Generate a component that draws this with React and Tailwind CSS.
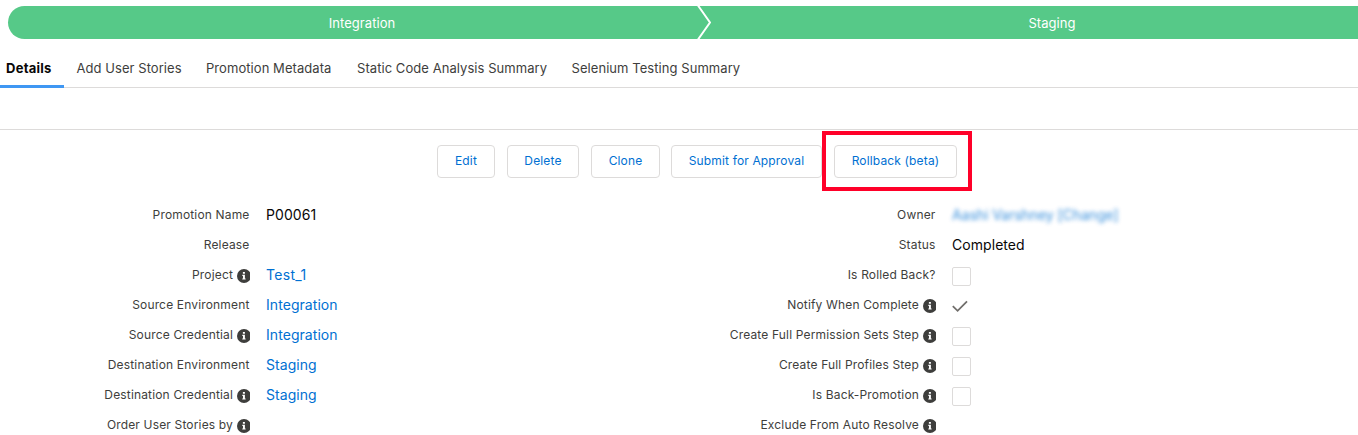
import React from "react";
import clsx from "clsx";

const tabs = [
  { label: "Details", width: "w-[70.5px]", active: true },
  { label: "Add User Stories", width: "w-[129.5px]" },
  { label: "Promotion Metadata", width: "w-[151px]" },
  { label: "Static Code Analysis Summary", width: "w-[214.5px]" },
  { label: "Selenium Testing Summary", width: "w-[200px]" },
];

const leftFields = [
  { label: "Promotion Name", value: "P00061" },
  { label: "Release" },
  { label: "Project", info: true, value: "Test_1", link: true, spacing: "tracking-[0.3px]" },
  { label: "Source Environment", value: "Integration", link: true },
  { label: "Source Credential", info: true, value: "Integration", link: true },
  { label: "Destination Environment", value: "Staging", link: true },
  { label: "Destination Credential", info: true, value: "Staging", link: true },
  { label: "Order User Stories by", info: true },
];

const rightFields = [
  { label: "Owner", value: "Aashi Varshney [Change]", link: true, blurred: true, spacing: "tracking-[-0.05px]" },
  { label: "Status", value: "Completed" },
  { label: "Is Rolled Back?", checked: false },
  { label: "Notify When Complete", info: true, checked: true },
  { label: "Create Full Permission Sets Step", info: true, checked: false },
  { label: "Create Full Profiles Step", info: true, checked: false },
  { label: "Is Back-Promotion", info: true, checked: false },
  { label: "Exclude From Auto Resolve", info: true },
];

// The right edge of the circle is cut off by its 12.5px wide box
const InfoIcon = () => (
  <svg className="ml-1 mt-px h-[14px] w-[12.5px] shrink-0" viewBox="0 0 12.5 14">
    <circle cx="7" cy="7" r="7" fill="#3e3e3c" />
    <path d="M5.9 3h2v1.8h-2zM5.3 5.8h2.6v3.7h.7v1.1H5.3V9.5H6V6.9h-.7z" fill="#fff" />
  </svg>
);

const Checkbox = ({ checked }) =>
  checked ? (
    <svg className="-ml-[0.5px] mt-px h-4 w-4" viewBox="0 0 16 16" fill="none">
      <path d="M.8 8.2 5.6 12.8 15 3.4" stroke="#706e6b" strokeWidth="1.8" />
    </svg>
  ) : (
    <span className="-ml-[0.5px] mt-0.5 block h-[19px] w-[19px] rounded-[2px] border border-[#dddbda] bg-white" />
  );

const Field = ({ label, info, value, link, blurred, checked, spacing = "tracking-[0.06px]" }) => (
  <div className="flex h-[30px] items-center">
    <div className="flex w-[249.5px] shrink-0 items-center justify-end whitespace-nowrap text-[12px] leading-[18px] tracking-[0.16px] text-[#3e3e3c]">
      {label}
      {info && <InfoIcon />}
    </div>
    <div
      className={clsx(
        "ml-[16.5px] whitespace-nowrap text-[14px] leading-5",
        spacing,
        link ? "text-[#0070d2]" : "text-[#080707]",
        blurred && "opacity-80 blur-[2px]"
      )}
    >
      {value}
      {checked !== undefined && <Checkbox checked={checked} />}
    </div>
  </div>
);

const ActionButton = ({ className, children }) => (
  <button
    className={clsx(
      "h-[33px] shrink-0 whitespace-nowrap rounded-[4px] border border-[#dddbda] bg-white pb-px text-center text-[12px] tracking-[0.15px] text-[#0070d2]",
      className
    )}
  >
    {children}
  </button>
);

export default function App() {
  return (
    <div className="h-[435px] w-[1358px] overflow-hidden bg-white font-['Inter',sans-serif]">
      {/* Promotion path */}
      <div className="ml-2 mt-[6px] flex h-[33px] overflow-hidden rounded-l-full bg-[#56c988] text-[13px] tracking-[0.06px] text-white">
        <div className="flex w-[689px] shrink-0 items-center justify-center pl-[19px] pt-0.5">Integration</div>
        <svg className="h-[33px] w-[14px] shrink-0" viewBox="0 0 14 33" fill="none">
          <path d="M1 -.5 13 16.5 1 33.5" stroke="#fff" strokeWidth="2" />
        </svg>
        <div className="flex w-[682px] shrink-0 items-center justify-center pt-0.5">Staging</div>
      </div>

      {/* Tabs */}
      <div className="flex h-[49px] border-b border-[#dddbda] text-[13px] tracking-[0.06px] text-[#3e3e3c]">
        {tabs.map((tab) => (
          <div key={tab.label} className={clsx("shrink-0 whitespace-nowrap", tab.width)}>
            <div
              className={clsx(
                "h-[49px] pl-[6px] pt-[19px] leading-5",
                tab.active && "w-16 border-b-3 border-[#3f97f3] font-bold tracking-[0.25px] text-[#080707]"
              )}
            >
              {tab.label}
            </div>
          </div>
        ))}
      </div>
      <div className="h-[42px] border-b border-[#dddbda]" />

      {/* Actions */}
      <div className="flex h-[61px] items-start pl-[437px] pt-px">
        <ActionButton className="mt-[14px] w-[58px]">Edit</ActionButton>
        <ActionButton className="ml-3 mt-[14px] w-[72px]">Delete</ActionButton>
        <ActionButton className="ml-3 mt-[14px] w-[69px]">Clone</ActionButton>
        <ActionButton className="ml-[11px] mt-[14px] w-[151px]">Submit for Approval</ActionButton>
        <div className="z-10 h-[60px] w-[150px] border-4 border-[#ff0029] pl-2 pt-[10px]">
          <ActionButton className="w-[123px]">Rollback (beta)</ActionButton>
        </div>
      </div>

      {/* Record details */}
      <div className="mt-[9px] flex">
        <div className="w-[686px]">
          {leftFields.map((field) => (
            <Field key={field.label} {...field} />
          ))}
        </div>
        <div className="flex-1">
          {rightFields.map((field) => (
            <Field key={field.label} {...field} />
          ))}
        </div>
      </div>
    </div>
  );
}
